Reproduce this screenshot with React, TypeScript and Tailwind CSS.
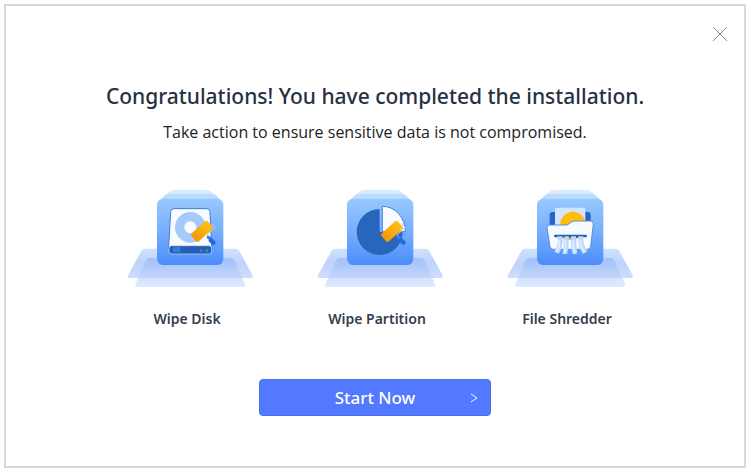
import React from 'react';

interface FeatureProps {
  id: string;
  title: string;
  children: React.ReactNode;
}

// Shared blue tile with the stacked sheets behind and the two trays below
function FeatureIcon({ id, children }: Omit<FeatureProps, 'title'>) {
  return (
    <svg viewBox="0 0 420 345" className="h-[115px] w-[140px]" aria-hidden="true">
      <defs>
        <linearGradient id={`${id}-tile`} x1="0" y1="0" x2="0" y2="1">
          <stop offset="0" stopColor="#98c8fe" />
          <stop offset="0.5" stopColor="#76aefd" />
          <stop offset="1" stopColor="#4a8cfb" />
        </linearGradient>
        <linearGradient id={`${id}-tray`} x1="0" y1="0" x2="0" y2="1">
          <stop offset="0" stopColor="#c5dcfd" stopOpacity="0.85" />
          <stop offset="0.5" stopColor="#b3cbfa" stopOpacity="0.85" />
          <stop offset="1" stopColor="#c8dafd" stopOpacity="0.9" />
        </linearGradient>
        <linearGradient id={`${id}-front`} x1="0" y1="0" x2="0" y2="1">
          <stop offset="0" stopColor="#93b7f8" stopOpacity="0.65" />
          <stop offset="0.65" stopColor="#b9d0fb" stopOpacity="0.6" />
          <stop offset="1" stopColor="#dde9ff" stopOpacity="0.9" />
        </linearGradient>
        <linearGradient id={`${id}-gold`} x1="0" y1="0" x2="1" y2="0">
          <stop offset="0" stopColor="#f39700" />
          <stop offset="1" stopColor="#ffc117" />
        </linearGradient>
      </defs>
      <path d="M74 206H346Q354 206 358 213L398 286Q401 294 392 294H30Q20 294 24 286L64 213Q67 206 74 206Z" fill={`url(#${id}-tray)`} />
      <path d="M88 234H332Q339 234 343 241L375 313Q378 321 370 321H51Q43 321 46 313L78 241Q81 234 88 234Z" fill={`url(#${id}-front)`} />
      <path d="M163 30H259Q268 30 276 37L302 62H120L146 37Q154 30 163 30Z" fill="#d9ecff" />
      <path d="M151 41H271Q282 41 290 48L304 64H117L132 48Q140 41 151 41Z" fill="#bbdcff" />
      <rect x="111" y="56" width="199" height="199" rx="19" fill={`url(#${id}-tile)`} />
      {children}
    </svg>
  );
}

// Orange roller brush that both wipe tools carry
function Roller({ id }: { id: string }) {
  return (
    <g>
      <path d="M275 131L286 143L262 164V172" fill="none" stroke="#b7cdf4" strokeWidth="3" strokeLinejoin="round" />
      <path d="M265 172L272 177" stroke="#3d7df0" strokeWidth="10" strokeLinecap="round" />
      <path d="M273 181L280 188" stroke="#2468e6" strokeWidth="14" strokeLinecap="round" />
      <rect x="213" y="138" width="66" height="32" rx="6" transform="rotate(-42 246 154)" fill={`url(#${id}-gold)`} />
    </g>
  );
}

function WipeDiskIcon() {
  return (
    <FeatureIcon id="disk">
      <path d="M162 86H260Q269 86 270 95L275 200V214Q275 222 266 222H155Q146 222 146 214V200L152 95Q153 86 162 86Z" fill="#f9fcff" stroke="#3f7ddb" strokeWidth="3" />
      <circle cx="211" cy="142" r="32" fill="none" stroke="#a4cbfb" strokeWidth="28" />
      <rect x="147" y="197" width="128" height="25" rx="8" fill="#235fb8" stroke="#d8eaff" strokeWidth="2" />
      <rect x="159" y="201" width="22" height="16" rx="2" fill="#397bd6" />
      <circle cx="243" cy="212" r="4" fill="#8b6a70" />
      <circle cx="260" cy="212" r="4" fill="#449d78" />
      <Roller id="disk" />
    </FeatureIcon>
  );
}

function WipePartitionIcon() {
  return (
    <FeatureIcon id="partition">
      <path d="M209 87A69 69 0 1 0 278 156H209Z" fill="#2866bd" />
      <path d="M217 79A68 76 0 0 1 286 155H217Z" fill="#f8fbff" stroke="#4383dd" strokeWidth="3" />
      <Roller id="partition" />
    </FeatureIcon>
  );
}

function FileShredderIcon() {
  return (
    <FeatureIcon id="shredder">
      <rect x="149" y="96" width="123" height="60" rx="9" fill="#2864c1" />
      <path d="M165 87Q165 83 170 83H250Q256 83 256 89V150H165Z" fill="#d0e5ff" />
      <circle cx="219" cy="133" r="38" fill="#ffbd09" />
      <path d="M148 135H198Q204 135 209 130L216 125Q219 123 225 123H272Q281 123 280 132L272 200Q271 208 262 208H160Q151 208 150 200L141 144Q140 135 148 135Z" fill="#f7fbff" stroke="#568ce0" strokeWidth="3" />
      <path d="M183 168H239Q233 180 211 180Q189 180 183 168Z" fill="#f6b51c" />
      <path d="M166 168H257" stroke="#245bb3" strokeWidth="8" strokeLinecap="round" />
      <path d="M172 169H187Q192 195 177 221L163 215Q177 192 172 169ZM190 169H206Q208 196 202 222L187 221Q194 196 190 169ZM213 169H228Q229 197 232 220L218 223Q211 198 213 169ZM235 169H250Q247 195 263 214L248 222Q233 198 235 169Z" fill="#bdd9ff" />
      <path d="M177 180Q181 201 169 216M196 180Q199 202 193 221M219 180Q219 204 225 221M241 180Q242 202 254 217" fill="none" stroke="#e1efff" strokeWidth="5" />
      <g fill="#245bb3">
        <circle cx="191" cy="170" r="3" />
        <circle cx="210" cy="171" r="3" />
        <circle cx="231" cy="170" r="3" />
      </g>
    </FeatureIcon>
  );
}

function Feature({ title, children }: Omit<FeatureProps, 'id'>) {
  return (
    <li className="flex flex-col items-center">
      {children}
      <span className="mt-3 pr-1.5 text-[14px] leading-6 font-semibold text-[#343e4e]">{title}</span>
    </li>
  );
}

export default function App() {
  return (
    <div className="flex min-h-screen bg-white p-1 font-['Noto_Sans',sans-serif]">
      <main className="flex flex-1 flex-col items-center border-2 border-[#d9d9d9]">
        <div className="flex w-full justify-end px-4 pt-5">
          <button type="button" aria-label="Close" className="text-[#858ba3]">
            <svg viewBox="0 0 16 16" className="size-4" fill="none" stroke="currentColor">
              <path d="M1 1L15 15M15 1L1 15" />
            </svg>
          </button>
        </div>

        <h1 className="mt-[38px] text-[21px] leading-8 font-medium text-[#263142]">
          Congratulations! You have completed the installation.
        </h1>
        <p className="mt-2 font-['Open_Sans',sans-serif] text-[16px] leading-6 text-[#222222]">
          Take action to ensure sensitive data is not compromised.
        </p>

        <ul className="mt-9 flex justify-center gap-[50px] pl-2.5">
          <Feature title="Wipe Disk">
            <WipeDiskIcon />
          </Feature>
          <Feature title="Wipe Partition">
            <WipePartitionIcon />
          </Feature>
          <Feature title="File Shredder">
            <FileShredderIcon />
          </Feature>
        </ul>

        <button
          type="button"
          className="mt-12 grid h-[37px] w-[232px] grid-cols-[1fr_auto_1fr] items-center rounded border border-[#486df0] bg-[#5279ff] px-3 text-[17px] font-medium text-white"
        >
          <span className="col-start-2">Start Now</span>
          <svg viewBox="0 0 8 10" className="h-2.5 w-2 justify-self-end" fill="none" stroke="currentColor" aria-hidden="true">
            <path d="M1 1L7 5L1 9" />
          </svg>
        </button>
      </main>
    </div>
  );
}
